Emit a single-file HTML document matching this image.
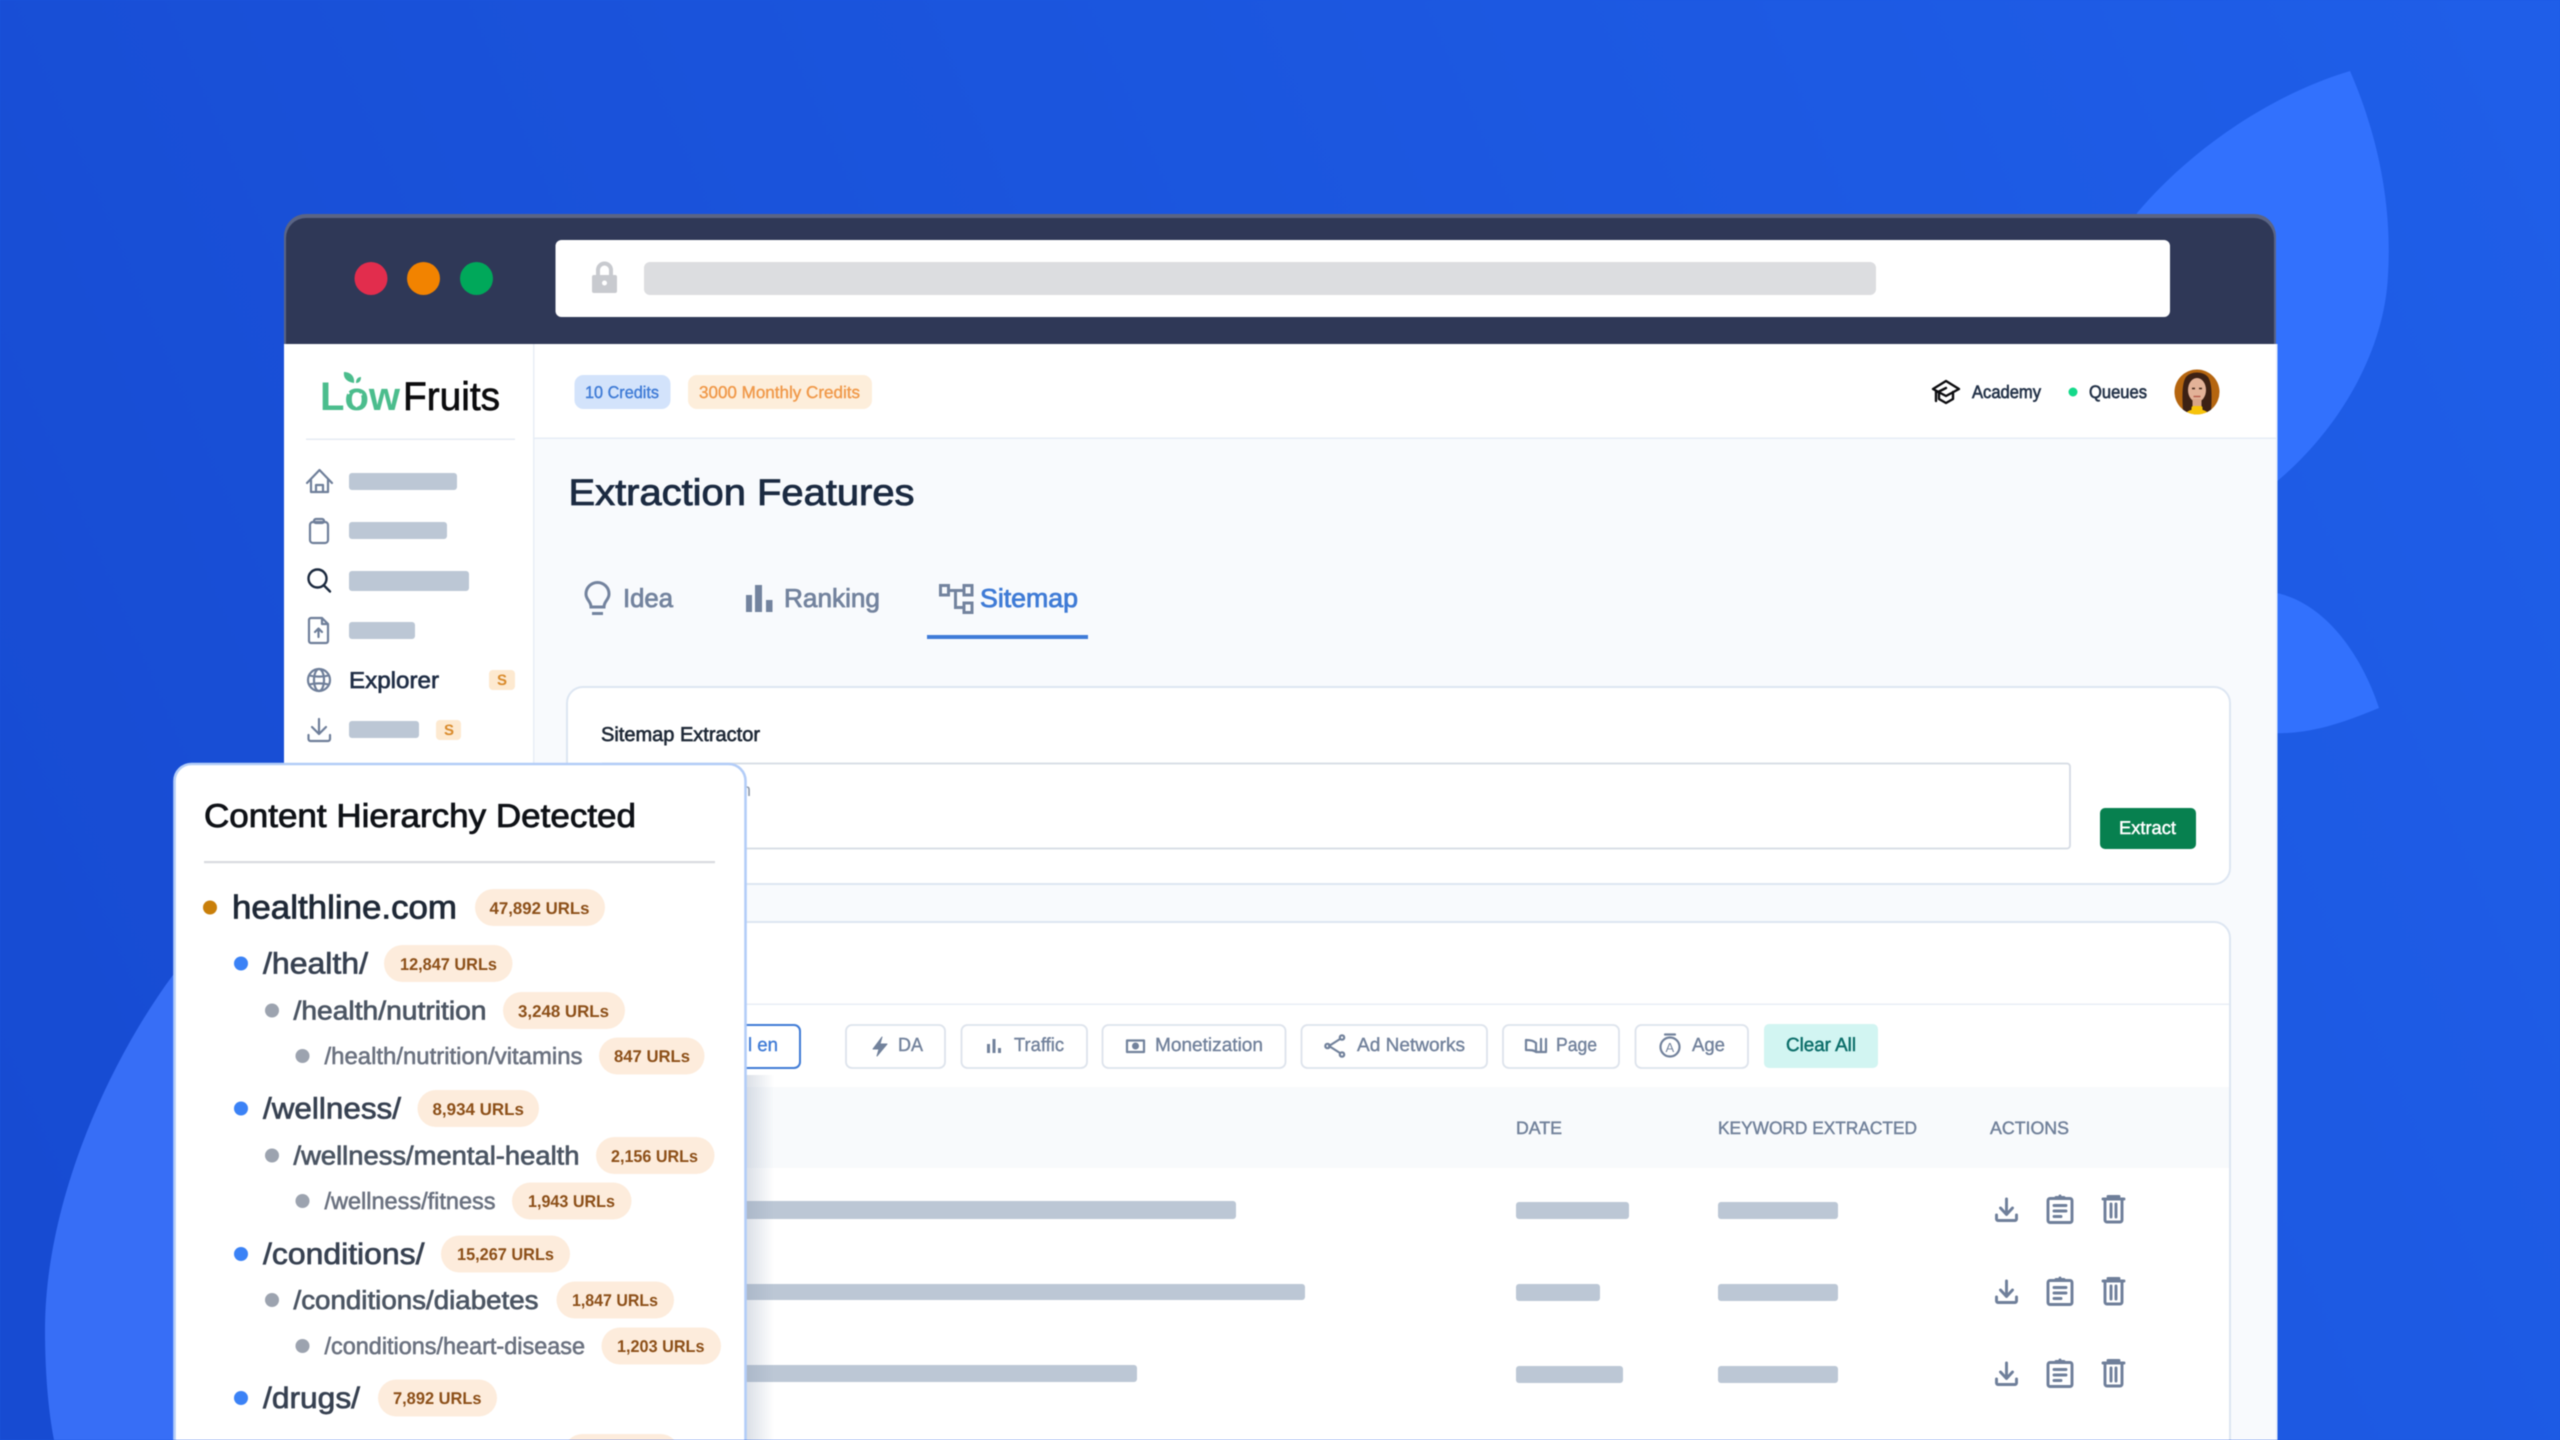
<!DOCTYPE html>
<html lang="en">
<head>
<meta charset="utf-8">
<title>LowFruits Extraction Features</title>
<style>
html,body{margin:0;padding:0;width:2560px;height:1440px;overflow:hidden;background:#1c58e0}
svg{display:block;filter:blur(.45px)}
text{font-family:"Liberation Sans",sans-serif;text-rendering:geometricPrecision;white-space:pre}
.m{stroke-width:.65px;paint-order:stroke}
.pt{font-size:17px;font-weight:bold;fill:#8c4f18}
.f{font-size:19px;fill:#72829c;stroke:#72829c;stroke-width:.4px}
.th{font-size:18px;fill:#71819a;stroke:#71819a;stroke-width:.45px}
.ic{fill:none;stroke:#6f7f9a;stroke-width:2.2;stroke-linecap:round;stroke-linejoin:round}
.ia{fill:none;stroke:#6f7f9a;stroke-width:2.9;stroke-linecap:round;stroke-linejoin:round}
.fi{fill:none;stroke:#72829c;stroke-width:2.2;stroke-linecap:round;stroke-linejoin:round}
.sk{fill:#bcc7d5}
</style>
</head>
<body>
<svg width="2560" height="1440" viewBox="0 0 2560 1440" xmlns="http://www.w3.org/2000/svg">
<defs>
<linearGradient id="bg" gradientUnits="userSpaceOnUse" x1="0" y1="1300" x2="2560" y2="200">
<stop offset="0" stop-color="#174bd2"/><stop offset=".5" stop-color="#1b55dd"/><stop offset="1" stop-color="#1f5ee8"/>
</linearGradient>
<linearGradient id="sh" x1="0" x2="1" y1="0" y2="0">
<stop offset="0" stop-color="#8494ad" stop-opacity=".3"/><stop offset="1" stop-color="#8494ad" stop-opacity="0"/>
</linearGradient>
<clipPath id="av"><circle cx="2197" cy="392" r="22.5"/></clipPath>
</defs>

<!-- background -->
<rect width="2560" height="1440" fill="url(#bg)"/>
<path d="M2350 71C2380 140 2392 210 2388 275C2384 360 2330 440 2270 487L2100 400L2137 213C2190 150 2270 95 2350 71Z" fill="#3271fd"/>
<path d="M2270 592C2320 598 2360 650 2379 708C2345 722 2310 735 2270 733Z" fill="#3271fd"/>
<path d="M173 975C110 1060 45 1200 45 1330C45 1370 48 1410 54 1440L300 1440L300 975Z" fill="#376ef6"/>

<!-- window chrome -->
<path d="M284 346V236a22 22 0 0 1 22-22H2254a22 22 0 0 1 22 22V346Z" fill="#5a6484"/>
<path d="M286 344V238a20 20 0 0 1 20-20H2254a20 20 0 0 1 20 20V344Z" fill="#2f3857"/>
<circle cx="371" cy="278.5" r="16.5" fill="#e22d4d"/>
<circle cx="423.5" cy="278.5" r="16.5" fill="#f28300"/>
<circle cx="476.5" cy="278.5" r="16.5" fill="#00a85a"/>
<rect x="555.5" y="240" width="1614.5" height="77" rx="6" fill="#fff"/>
<path d="M598 276V270a6.5 6.5 0 0 1 13 0V276" fill="none" stroke="#c8cacf" stroke-width="4"/>
<rect x="592" y="275" width="25" height="18" rx="2" fill="#c8cacf"/>
<circle cx="604.5" cy="283" r="2.5" fill="#fff"/>
<rect x="644" y="262" width="1232" height="33" rx="6" fill="#dcdde0"/>

<!-- window body -->
<rect x="284" y="344" width="1992" height="1096" fill="#f8fafd"/>
<rect x="284" y="344" width="250" height="1096" fill="#fff"/>
<rect x="533" y="344" width="1743" height="94" fill="#fff"/>
<rect x="533" y="344" width="1.5" height="1096" fill="#e8eef6"/>
<rect x="533" y="437.5" width="1743" height="1.5" fill="#e6edf6"/>
<rect x="2276" y="344" width="1.5" height="1096" fill="#e3ebf8"/>

<!-- logo -->
<path d="M354 383C347 382 343 378 344 372C351 372 355 377 354 383ZM356 383C356 379 358 377 361 377C361 380 360 383 356 383Z" fill="#4bbd8d"/>
<text x="320" y="410" font-size="40" font-weight="bold" fill="#4bbd8d" textLength="80" lengthAdjust="spacingAndGlyphs">Low</text>
<path d="M346 388L349 394M362 394L357 397M357 407L354 402" stroke="#fff" stroke-width="2"/>
<text x="403" y="410" font-size="40" fill="#0c0c0e" stroke="#0c0c0e" stroke-width=".7" textLength="97" lengthAdjust="spacingAndGlyphs">Fruits</text>
<rect x="306" y="438.5" width="209" height="1.5" fill="#e6ebf3"/>

<!-- sidebar -->
<g class="ic">
<path d="M307 483L319.5 470L332 483M311 480V492H328V480M316 492V485H323V492"/>
<rect x="310" y="522" width="18" height="21" rx="3"/><rect x="314" y="519" width="10" height="4" rx="2"/>
<path d="M311 618H322L328 624V641a2 2 0 0 1-2 2H311a2 2 0 0 1-2-2V620a2 2 0 0 1 2-2ZM322 618V624H328M318.5 637V629M315 632L318.5 628.5L322 632"/>
<circle cx="319" cy="680" r="11"/><ellipse cx="319" cy="680" rx="5" ry="11"/><path d="M309.5 675.5C315 677 323 677 328.5 675.5M309.5 684.5C315 683 323 683 328.5 684.5"/>
<path d="M319 719V734M312 727L319 734L326 727M308.5 735V739a2 2 0 0 0 2 2H328a2 2 0 0 0 2-2V735"/>
</g>
<g fill="none" stroke="#1c2a3f" stroke-width="2.4" stroke-linecap="round"><circle cx="317.5" cy="578.5" r="9"/><path d="M324 585.5L330 591.5"/></g>
<rect class="sk" x="349" y="473" width="108" height="17" rx="3"/>
<rect class="sk" x="349" y="522" width="98" height="17" rx="3"/>
<rect class="sk" x="349" y="571" width="120" height="20" rx="3"/>
<rect class="sk" x="349" y="622" width="66" height="17" rx="3"/>
<rect class="sk" x="349" y="721" width="70" height="17" rx="3"/>
<text x="349" y="688" font-size="23" fill="#1f2d45" stroke="#1f2d45" class="m" textLength="90" lengthAdjust="spacingAndGlyphs">Explorer</text>
<rect x="489" y="670" width="26" height="20" rx="4" fill="#fde9d0"/>
<text x="497" y="685" font-size="15" font-weight="bold" fill="#d98a2b">S</text>
<rect x="436" y="720" width="25" height="20" rx="4" fill="#fde9d0"/>
<text x="444" y="735" font-size="15" font-weight="bold" fill="#d98a2b">S</text>

<!-- topbar -->
<rect x="574.5" y="375" width="96" height="34" rx="9" fill="#d3e3fb"/>
<text x="585" y="398" font-size="17" fill="#3f7bd6" stroke="#3f7bd6" stroke-width=".4" textLength="74" lengthAdjust="spacingAndGlyphs">10 Credits</text>
<rect x="688" y="375" width="184" height="34" rx="9" fill="#fdeedb"/>
<text x="699" y="398" font-size="17" fill="#f0994a" stroke="#f0994a" stroke-width=".4" textLength="161" lengthAdjust="spacingAndGlyphs">3000 Monthly Credits</text>
<g fill="none" stroke="#0d0d10" stroke-width="2.4" stroke-linejoin="round" stroke-linecap="round">
<path d="M1946 381L1959 389L1946 396L1933 389ZM1939 392V399L1946 403L1953 399V392M1936 391V401M1946 388L1938 392"/>
</g>
<text x="1972" y="398" font-size="18" fill="#243349" stroke="#243349" class="m" textLength="69" lengthAdjust="spacingAndGlyphs">Academy</text>
<circle cx="2073" cy="392" r="4.5" fill="#14d98a"/>
<text x="2089" y="398" font-size="18" fill="#243349" stroke="#243349" class="m" textLength="58" lengthAdjust="spacingAndGlyphs">Queues</text>
<g clip-path="url(#av)">
<rect x="2170" y="365" width="54" height="54" fill="#b5650f"/>
<path d="M2183 412C2182 395 2182 383 2186 377C2191 371 2203 371 2208 377C2212 383 2212 395 2211 412Z" fill="#3d2114"/>
<ellipse cx="2197" cy="390" rx="9" ry="12" fill="#e3b298"/>
<rect x="2192.5" y="399" width="9" height="9" fill="#d8a487"/>
<ellipse cx="2197" cy="417" rx="13" ry="8" fill="#f7c30a"/>
<rect x="2191.5" y="406" width="11" height="6" rx="2" fill="#f7c30a"/>
<path d="M2192 388.5h3M2199 388.5h3" stroke="#3d2114" stroke-width="1.5"/>
<path d="M2193.5 396.5h7" stroke="#b9604f" stroke-width="1.5"/>
</g>

<!-- title -->
<text x="568.5" y="505" font-size="37" fill="#1b2a41" stroke="#1b2a41" stroke-width=".85" textLength="346" lengthAdjust="spacingAndGlyphs">Extraction Features</text>

<!-- tabs -->
<path d="M591 607H604C604 601 609 600 609 594A11.5 11.5 0 0 0 586 594C586 600 591 601 591 607Z" fill="none" stroke="#73839e" stroke-width="3"/>
<rect x="592" y="612" width="11" height="3" fill="#73839e"/>
<text x="623" y="607" font-size="26" fill="#73839e" stroke="#73839e" stroke-width=".8" textLength="50" lengthAdjust="spacingAndGlyphs">Idea</text>
<rect x="746" y="595" width="6" height="17" fill="#73839e"/><rect x="755" y="585" width="7" height="27" fill="#73839e"/><rect x="766" y="600" width="6.5" height="12" fill="#73839e"/>
<text x="784" y="607" font-size="26" fill="#73839e" stroke="#73839e" stroke-width=".8" textLength="96" lengthAdjust="spacingAndGlyphs">Ranking</text>
<g fill="none" stroke="#73839e" stroke-width="3">
<rect x="940.5" y="585.5" width="8" height="9.5"/><rect x="964" y="585.5" width="8" height="9.5"/><rect x="964" y="603" width="8" height="9.5"/>
<path d="M948 590.5H964M955.5 590.5V607.5H964"/>
</g>
<text x="980" y="607" font-size="26" fill="#3f7bd6" stroke="#3f7bd6" stroke-width=".8" textLength="98" lengthAdjust="spacingAndGlyphs">Sitemap</text>
<rect x="927" y="635" width="161" height="4" fill="#3f7bd8"/>

<!-- extractor card -->
<rect x="567" y="687" width="1663" height="197" rx="16" fill="#fff" stroke="#dde6f2" stroke-width="2"/>
<text x="601" y="741" font-size="20" fill="#1f2937" stroke="#1f2937" class="m" textLength="159" lengthAdjust="spacingAndGlyphs">Sitemap Extractor</text>
<rect x="600" y="763.5" width="1470" height="85" rx="3" fill="#fff" stroke="#d5dbe4" stroke-width="1.8"/>
<text x="741" y="796" font-size="18" fill="#8a95a6">n</text>
<rect x="2100" y="808" width="96" height="41" rx="5" fill="#07804f"/>
<text x="2119" y="834" font-size="18.5" fill="#fff" stroke="#fff" stroke-width=".5" textLength="57" lengthAdjust="spacingAndGlyphs">Extract</text>

<!-- results card -->
<path d="M567 1480V938a16 16 0 0 1 16-16H2214a16 16 0 0 1 16 16V1480Z" fill="#fff" stroke="#dde6f2" stroke-width="2"/>
<rect x="568" y="1003.5" width="1661" height="1.5" fill="#e9eef5"/>

<!-- filter buttons -->
<rect x="600" y="1025" width="200" height="43" rx="6" fill="#fff" stroke="#3f7bd6" stroke-width="2"/>
<text x="748" y="1051" font-size="19" fill="#3f7bd6" stroke="#3f7bd6" stroke-width=".4" textLength="30" lengthAdjust="spacingAndGlyphs">l en</text>
<g fill="#fff" stroke="#dde3ec" stroke-width="1.8">
<rect x="846" y="1025" width="99" height="43" rx="6"/>
<rect x="961.5" y="1025" width="125.5" height="43" rx="6"/>
<rect x="1102.5" y="1025" width="183" height="43" rx="6"/>
<rect x="1301.5" y="1025" width="185.5" height="43" rx="6"/>
<rect x="1503" y="1025" width="116" height="43" rx="6"/>
<rect x="1635.5" y="1025" width="112.5" height="43" rx="6"/>
</g>
<rect x="1764" y="1024" width="114" height="44" rx="5" fill="#d2f5f2"/>
<path d="M882 1037L873 1049H879L877 1056L887 1044H880Z" fill="#72829c" stroke="#72829c" stroke-width="1" stroke-linejoin="round"/>
<text x="898" y="1051" class="f" textLength="25" lengthAdjust="spacingAndGlyphs">DA</text>
<rect x="987" y="1044" width="3" height="9" fill="#72829c"/><rect x="992.5" y="1039" width="3" height="14" fill="#72829c"/><rect x="998" y="1048" width="3" height="5" fill="#72829c"/>
<text x="1014" y="1051" class="f" textLength="50" lengthAdjust="spacingAndGlyphs">Traffic</text>
<rect x="1127" y="1040.5" width="17" height="11.5" class="fi"/><circle cx="1135.5" cy="1046" r="3.5" fill="#72829c"/>
<text x="1155" y="1051" class="f" textLength="108" lengthAdjust="spacingAndGlyphs">Monetization</text>
<g class="fi"><path d="M1340 1039L1329 1046L1340 1053"/><circle cx="1327.5" cy="1046" r="2.2"/><circle cx="1342" cy="1037.5" r="2.2"/><circle cx="1342" cy="1054.5" r="2.2"/></g>
<text x="1357" y="1051" class="f" textLength="108" lengthAdjust="spacingAndGlyphs">Ad Networks</text>
<path d="M1526 1040C1530 1040 1534 1041 1536 1043V1052C1534 1050 1530 1050 1526 1050ZM1541 1039V1051M1546 1039V1051M1536 1052H1546" class="fi"/>
<text x="1556" y="1051" class="f" textLength="41" lengthAdjust="spacingAndGlyphs">Page</text>
<circle cx="1670" cy="1047" r="9.5" class="fi"/><path d="M1665 1034.5H1675" class="fi"/>
<text x="1665.5" y="1052" font-size="13" fill="#72829c">A</text>
<text x="1692" y="1051" class="f" textLength="33" lengthAdjust="spacingAndGlyphs">Age</text>
<text x="1786" y="1051" font-size="19" fill="#0c6e6a" stroke="#0c6e6a" stroke-width=".5" textLength="70" lengthAdjust="spacingAndGlyphs">Clear All</text>

<!-- table -->
<rect x="568" y="1087" width="1661" height="81" fill="#f8fafc"/>
<text x="1516" y="1134" class="th" textLength="46" lengthAdjust="spacingAndGlyphs">DATE</text>
<text x="1718" y="1134" class="th" textLength="199" lengthAdjust="spacingAndGlyphs">KEYWORD EXTRACTED</text>
<text x="1990" y="1134" class="th" textLength="79" lengthAdjust="spacingAndGlyphs">ACTIONS</text>

<rect class="sk" x="640" y="1201" width="596" height="18" rx="3"/>
<rect class="sk" x="640" y="1284" width="665" height="16" rx="3"/>
<rect class="sk" x="640" y="1365" width="497" height="17" rx="3"/>
<rect class="sk" x="1516" y="1202" width="113" height="17" rx="3"/>
<rect class="sk" x="1516" y="1284" width="84" height="17" rx="3"/>
<rect class="sk" x="1516" y="1366" width="107" height="17" rx="3"/>
<rect class="sk" x="1718" y="1202" width="120" height="17" rx="3"/>
<rect class="sk" x="1718" y="1284" width="120" height="17" rx="3"/>
<rect class="sk" x="1718" y="1366" width="120" height="17" rx="3"/>

<g class="ia">
<g>
<path d="M2006.5 1199V1214M2000.5 1208L2006.5 1214.5L2012.5 1208M1996.5 1215V1219a1.5 1.5 0 0 0 1.5 1.5H2015a1.5 1.5 0 0 0 1.5-1.5V1215"/>
<rect x="2048" y="1198.5" width="24" height="24" rx="2"/><path d="M2056 1197.5H2064M2060 1196V1197M2054 1205.5H2066M2054 1211H2066M2054 1216.5H2061"/>
<path d="M2103 1199H2124M2108 1196.5H2119M2105 1199V1220a2 2 0 0 0 2 2H2120a2 2 0 0 0 2-2V1199M2111 1204V1217M2116 1204V1217"/>
</g>
<g transform="translate(0 82)">
<path d="M2006.5 1199V1214M2000.5 1208L2006.5 1214.5L2012.5 1208M1996.5 1215V1219a1.5 1.5 0 0 0 1.5 1.5H2015a1.5 1.5 0 0 0 1.5-1.5V1215"/>
<rect x="2048" y="1198.5" width="24" height="24" rx="2"/><path d="M2056 1197.5H2064M2060 1196V1197M2054 1205.5H2066M2054 1211H2066M2054 1216.5H2061"/>
<path d="M2103 1199H2124M2108 1196.5H2119M2105 1199V1220a2 2 0 0 0 2 2H2120a2 2 0 0 0 2-2V1199M2111 1204V1217M2116 1204V1217"/>
</g>
<g transform="translate(0 164)">
<path d="M2006.5 1199V1214M2000.5 1208L2006.5 1214.5L2012.5 1208M1996.5 1215V1219a1.5 1.5 0 0 0 1.5 1.5H2015a1.5 1.5 0 0 0 1.5-1.5V1215"/>
<rect x="2048" y="1198.5" width="24" height="24" rx="2"/><path d="M2056 1197.5H2064M2060 1196V1197M2054 1205.5H2066M2054 1211H2066M2054 1216.5H2061"/>
<path d="M2103 1199H2124M2108 1196.5H2119M2105 1199V1220a2 2 0 0 0 2 2H2120a2 2 0 0 0 2-2V1199M2111 1204V1217M2116 1204V1217"/>
</g>
</g>

<!-- popup shadow -->
<rect x="746" y="1075" width="28" height="365" fill="url(#sh)"/>

<!-- popup -->
<rect x="174.5" y="764" width="571" height="700" rx="17" fill="#fff" stroke="#b3cdf8" stroke-width="2.6"/>
<text x="204" y="827" font-size="33" fill="#0f1217" stroke="#0f1217" stroke-width=".8" textLength="432" lengthAdjust="spacingAndGlyphs">Content Hierarchy Detected</text>
<rect x="204" y="861" width="511" height="2.2" fill="#d9dbdf"/>

<circle cx="210" cy="907.5" r="7" fill="#c97f0a"/>
<text x="232" y="918.5" font-size="33" fill="#1f2937" stroke="#1f2937" stroke-width=".8" textLength="225" lengthAdjust="spacingAndGlyphs">healthline.com</text>
<rect x="475" y="889" width="130" height="37" rx="18.5" fill="#fdecdc"/>
<text x="489.5" y="914" class="pt" textLength="100" lengthAdjust="spacingAndGlyphs">47,892 URLs</text>

<circle cx="241" cy="963.5" r="7" fill="#3b82f6"/>
<text x="263" y="973.5" font-size="29.5" fill="#374151" stroke="#374151" stroke-width=".7" textLength="105" lengthAdjust="spacingAndGlyphs">/health/</text>
<rect x="384" y="945" width="128.5" height="37" rx="18.5" fill="#fdecdc"/>
<text x="400" y="970" class="pt" textLength="97" lengthAdjust="spacingAndGlyphs">12,847 URLs</text>

<circle cx="272" cy="1010.5" r="7" fill="#9ca3af"/>
<text x="293.5" y="1019.5" font-size="26" fill="#4b5563" stroke="#4b5563" stroke-width=".7" textLength="193" lengthAdjust="spacingAndGlyphs">/health/nutrition</text>
<rect x="503" y="992" width="122" height="37" rx="18.5" fill="#fdecdc"/>
<text x="518" y="1017" class="pt" textLength="91" lengthAdjust="spacingAndGlyphs">3,248 URLs</text>

<circle cx="302.5" cy="1056" r="7" fill="#9ca3af"/>
<text x="324.5" y="1064" font-size="23.5" fill="#6b7280" stroke="#6b7280" stroke-width=".6" textLength="258" lengthAdjust="spacingAndGlyphs">/health/nutrition/vitamins</text>
<rect x="599" y="1037.5" width="105.5" height="37" rx="18.5" fill="#fdecdc"/>
<text x="614" y="1062" class="pt" textLength="76" lengthAdjust="spacingAndGlyphs">847 URLs</text>

<circle cx="241" cy="1108.5" r="7" fill="#3b82f6"/>
<text x="263" y="1118.5" font-size="29.5" fill="#374151" stroke="#374151" stroke-width=".7" textLength="138" lengthAdjust="spacingAndGlyphs">/wellness/</text>
<rect x="417.5" y="1090" width="121.5" height="37" rx="18.5" fill="#fdecdc"/>
<text x="432.5" y="1115" class="pt" textLength="91.5" lengthAdjust="spacingAndGlyphs">8,934 URLs</text>

<circle cx="272" cy="1155.5" r="7" fill="#9ca3af"/>
<text x="293.5" y="1164.5" font-size="26" fill="#4b5563" stroke="#4b5563" stroke-width=".7" textLength="286" lengthAdjust="spacingAndGlyphs">/wellness/mental-health</text>
<rect x="596" y="1137" width="118.5" height="37" rx="18.5" fill="#fdecdc"/>
<text x="611" y="1162" class="pt" textLength="87" lengthAdjust="spacingAndGlyphs">2,156 URLs</text>

<circle cx="302.5" cy="1201" r="7" fill="#9ca3af"/>
<text x="324.5" y="1209" font-size="23.5" fill="#6b7280" stroke="#6b7280" stroke-width=".6" textLength="171" lengthAdjust="spacingAndGlyphs">/wellness/fitness</text>
<rect x="512" y="1182.5" width="119.5" height="37" rx="18.5" fill="#fdecdc"/>
<text x="528" y="1207" class="pt" textLength="87" lengthAdjust="spacingAndGlyphs">1,943 URLs</text>

<circle cx="241" cy="1254" r="7" fill="#3b82f6"/>
<text x="263" y="1264" font-size="29.5" fill="#374151" stroke="#374151" stroke-width=".7" textLength="161.5" lengthAdjust="spacingAndGlyphs">/conditions/</text>
<rect x="441" y="1235.5" width="129" height="37" rx="18.5" fill="#fdecdc"/>
<text x="457" y="1260" class="pt" textLength="97" lengthAdjust="spacingAndGlyphs">15,267 URLs</text>

<circle cx="272" cy="1300" r="7" fill="#9ca3af"/>
<text x="293.5" y="1309" font-size="26" fill="#4b5563" stroke="#4b5563" stroke-width=".7" textLength="245" lengthAdjust="spacingAndGlyphs">/conditions/diabetes</text>
<rect x="556.5" y="1281.5" width="117.5" height="37" rx="18.5" fill="#fdecdc"/>
<text x="572" y="1306" class="pt" textLength="86" lengthAdjust="spacingAndGlyphs">1,847 URLs</text>

<circle cx="302.5" cy="1346" r="7" fill="#9ca3af"/>
<text x="324.5" y="1354" font-size="23.5" fill="#6b7280" stroke="#6b7280" stroke-width=".6" textLength="260.5" lengthAdjust="spacingAndGlyphs">/conditions/heart-disease</text>
<rect x="601.5" y="1327.5" width="119.5" height="37" rx="18.5" fill="#fdecdc"/>
<text x="617" y="1352" class="pt" textLength="87.5" lengthAdjust="spacingAndGlyphs">1,203 URLs</text>

<circle cx="241" cy="1398" r="7" fill="#3b82f6"/>
<text x="263" y="1408" font-size="29.5" fill="#374151" stroke="#374151" stroke-width=".7" textLength="97" lengthAdjust="spacingAndGlyphs">/drugs/</text>
<rect x="378" y="1379.5" width="119" height="37" rx="18.5" fill="#fdecdc"/>
<text x="393" y="1404" class="pt" textLength="88.5" lengthAdjust="spacingAndGlyphs">7,892 URLs</text>

<rect x="564" y="1434" width="115" height="37" rx="18.5" fill="#fdecdc"/>
</svg>
</body>
</html>
